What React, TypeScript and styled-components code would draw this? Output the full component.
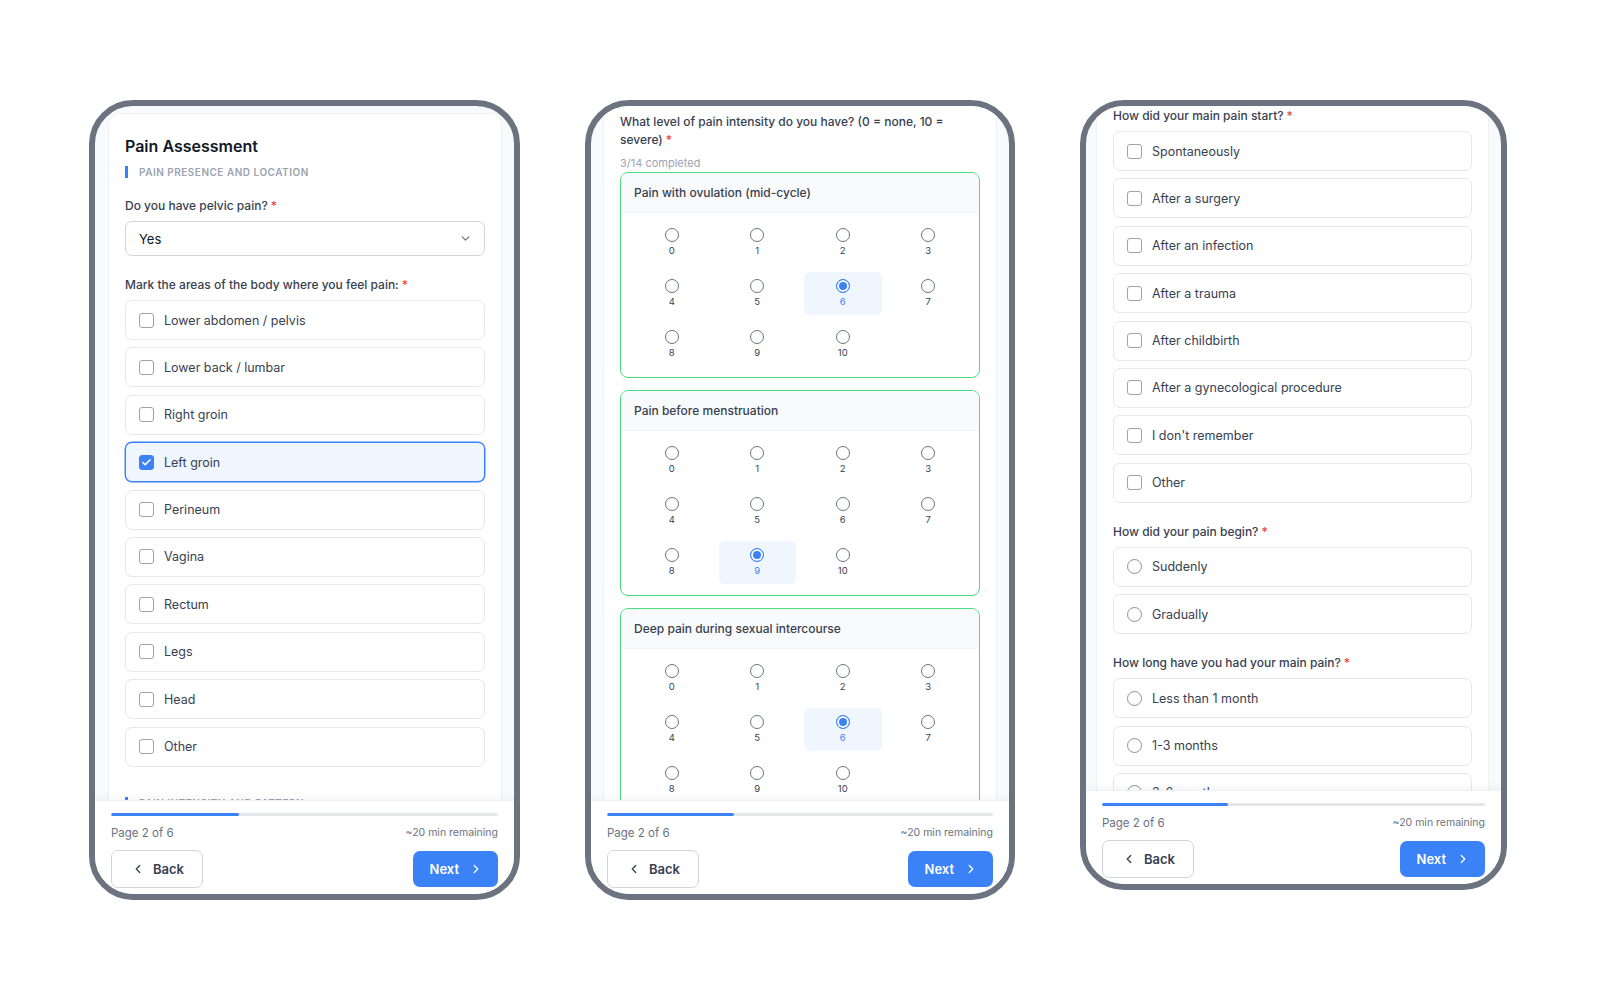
import React from 'react';
import styled, { createGlobalStyle } from 'styled-components';
import { Check, ChevronDown, ChevronLeft, ChevronRight } from 'lucide-react';

const GlobalStyle = createGlobalStyle`
    html, body {
        margin: 0;
        background: #ffffff;
    }

    body {
        color: #374151;
        font-family: Inter, "Noto Sans", "Liberation Sans", sans-serif;
        -webkit-font-smoothing: antialiased;
    }

    * {
        box-sizing: border-box;
    }
`;

const Stage = styled.main`
    align-items: flex-start;
    display: flex;
    gap: 65px;
    height: 1000px;
    padding: 100px 0 0 89px;
    width: 1600px;
`;

const Phone = styled.section<{ $w: number; $h: number }>`
    background: #f9fafb;
    border: 6px solid #6b7280;
    border-radius: 44px;
    display: flex;
    flex-direction: column;
    flex-shrink: 0;
    height: ${({ $h }) => $h}px;
    overflow: hidden;
    width: ${({ $w }) => $w}px;
`;

const Viewport = styled.div<{ $left: number }>`
    flex: 1;
    min-height: 0;
    overflow: hidden;
    padding: 0 12px 0 ${({ $left }) => $left}px;
`;

const Card = styled.div<{ $offset: number }>`
    background: #ffffff;
    border: 1px solid #f0f1f3;
    border-radius: 12px;
    margin-top: ${({ $offset }) => $offset}px;
    padding: 16px;
`;

const Title = styled.h1`
    color: #111827;
    font-size: 16px;
    font-weight: 600;
    line-height: 20px;
    margin: 6px 0 0;
`;

const Subtitle = styled.div<{ $gap: number }>`
    border-left: 3px solid #3b82f6;
    color: #9ca3af;
    font-size: 10px;
    font-weight: 600;
    letter-spacing: 0.5px;
    line-height: 12px;
    margin-top: ${({ $gap }) => $gap}px;
    padding-left: 11px;
    text-transform: uppercase;
`;

const Field = styled.div<{ $gap: number }>`
    margin-top: ${({ $gap }) => $gap}px;
`;

const Label = styled.div`
    color: #374151;
    font-size: 12px;
    font-weight: 500;
    line-height: 16px;
    margin-bottom: 7px;
`;

const Required = styled.span`
    color: #ef4444;
    margin-left: 3px;
`;

const Select = styled.div`
    align-items: center;
    border: 1px solid #d1d5db;
    border-radius: 7px;
    color: #111827;
    display: flex;
    font-size: 13px;
    height: 35px;
    justify-content: space-between;
    padding: 0 12px 0 13px;
`;

const OptionRow = styled.div<{ $checked?: boolean }>`
    align-items: center;
    background: ${({ $checked }) => ($checked ? '#eff6ff' : '#ffffff')};
    border: 1px solid ${({ $checked }) => ($checked ? '#3b82f6' : '#e5e7eb')};
    border-radius: 7px;
    box-shadow: ${({ $checked }) => ($checked ? '0 0 0 0.5px #3b82f6' : 'none')};
    color: #374151;
    display: flex;
    font-size: 12.5px;
    gap: 10px;
    height: 40px;
    padding: 0 13px;

    & + & {
        margin-top: 7.4px;
    }
`;

const CheckBox = styled.span<{ $checked?: boolean }>`
    align-items: center;
    background: ${({ $checked }) => ($checked ? '#3b82f6' : '#ffffff')};
    border: 1.5px solid ${({ $checked }) => ($checked ? '#3b82f6' : '#9ca3af')};
    border-radius: 3px;
    display: inline-flex;
    flex-shrink: 0;
    height: 15px;
    justify-content: center;
    width: 15px;
`;

const RadioCircle = styled.span`
    border: 1.5px solid #8a919c;
    border-radius: 50%;
    flex-shrink: 0;
    height: 15px;
    width: 15px;
`;

const Question = styled.div`
    color: #374151;
    font-size: 12px;
    font-weight: 500;
    line-height: 18px;
`;

const Completed = styled.div`
    color: #9ca3af;
    font-size: 11px;
    line-height: 14px;
    margin: 7px 0 2px;
`;

const ScaleGroup = styled.div`
    border: 1.5px solid #4ade80;
    border-radius: 8px;
    overflow: hidden;

    & + & {
        margin-top: 12px;
    }
`;

const ScaleHeader = styled.div`
    align-items: center;
    background: #f9fafb;
    border-bottom: 1px solid #f1f3f5;
    color: #374151;
    display: flex;
    font-size: 12px;
    font-weight: 500;
    height: 40px;
    padding: 0 13px;
`;

const ScaleGrid = styled.div`
    display: grid;
    gap: 8px;
    grid-template-columns: repeat(4, 1fr);
    padding: 8px 12px 11px;
`;

const ScaleCell = styled.div<{ $on: boolean }>`
    align-items: center;
    background: ${({ $on }) => ($on ? '#eff6ff' : 'transparent')};
    border-radius: 6px;
    display: flex;
    flex-direction: column;
    gap: 3px;
    padding: 7px 0;
`;

const ScaleDot = styled.span<{ $on: boolean }>`
    background: ${({ $on }) => ($on ? '#3b82f6' : '#ffffff')};
    border: 1.5px solid ${({ $on }) => ($on ? '#3b82f6' : '#6b7280')};
    border-radius: 50%;
    box-shadow: ${({ $on }) => ($on ? 'inset 0 0 0 2px #ffffff' : 'none')};
    height: 14px;
    width: 14px;
`;

const ScaleNumber = styled.span<{ $on: boolean }>`
    color: ${({ $on }) => ($on ? '#3b82f6' : '#374151')};
    font-size: 9.5px;
    line-height: 12px;
`;

const Footer = styled.footer`
    background: #ffffff;
    border-top: 1px solid #eef0f3;
    box-shadow: 0 -3px 8px rgba(17, 24, 39, 0.04);
    flex-shrink: 0;
    padding: 12px 16px 6px;
    position: relative;
`;

const Track = styled.div`
    background: #e5e7eb;
    border-radius: 2px;
    height: 3px;
    overflow: hidden;
`;

const Fill = styled.div<{ $pct: number }>`
    background: #3b82f6;
    border-radius: 2px;
    height: 100%;
    width: ${({ $pct }) => $pct}%;
`;

const MetaRow = styled.div`
    align-items: center;
    display: flex;
    justify-content: space-between;
    line-height: 14px;
    margin-top: 10px;
`;

const PageText = styled.span`
    color: #6b7280;
    font-size: 11.5px;
`;

const Remaining = styled.span`
    color: #6b7280;
    font-size: 10.5px;
`;

const ButtonRow = styled.div`
    align-items: center;
    display: flex;
    justify-content: space-between;
    margin-top: 10px;
`;

const BackButton = styled.button`
    align-items: center;
    background: #ffffff;
    border: 1.5px solid #d1d5db;
    border-radius: 7px;
    color: #374151;
    display: flex;
    font-family: inherit;
    font-size: 13px;
    font-weight: 600;
    gap: 8px;
    height: 38px;
    padding: 0 18px 0 19px;
`;

const NextButton = styled.button`
    align-items: center;
    background: #3b82f6;
    border: none;
    border-radius: 7px;
    color: #ffffff;
    display: flex;
    font-family: inherit;
    font-size: 13px;
    font-weight: 600;
    gap: 10px;
    height: 36px;
    padding: 0 15px 0 17px;
`;

const bodyAreas = [
    'Lower abdomen / pelvis',
    'Lower back / lumbar',
    'Right groin',
    'Left groin',
    'Perineum',
    'Vagina',
    'Rectum',
    'Legs',
    'Head',
    'Other',
];

const painStarts = [
    'Spontaneously',
    'After a surgery',
    'After an infection',
    'After a trauma',
    'After childbirth',
    'After a gynecological procedure',
    "I don't remember",
    'Other',
];

const scales = [
    { title: 'Pain with ovulation (mid-cycle)', value: 6 },
    { title: 'Pain before menstruation', value: 9 },
    { title: 'Deep pain during sexual intercourse', value: 6 },
];

const CheckOption = ({ label, checked }: { label: string; checked?: boolean }) => (
    <OptionRow $checked={checked}>
        <CheckBox $checked={checked}>
            {checked && <Check size={11} strokeWidth={3.5} color="#ffffff" />}
        </CheckBox>
        {label}
    </OptionRow>
);

const RadioOption = ({ label }: { label: string }) => (
    <OptionRow>
        <RadioCircle />
        {label}
    </OptionRow>
);

const Scale = ({ title, value }: { title: string; value: number }) => (
    <ScaleGroup>
        <ScaleHeader>{title}</ScaleHeader>
        <ScaleGrid>
            {Array.from({ length: 11 }, (_, n) => (
                <ScaleCell key={n} $on={n === value}>
                    <ScaleDot $on={n === value} />
                    <ScaleNumber $on={n === value}>{n}</ScaleNumber>
                </ScaleCell>
            ))}
        </ScaleGrid>
    </ScaleGroup>
);

const NavFooter = () => (
    <Footer>
        <Track>
            <Fill $pct={33} />
        </Track>
        <MetaRow>
            <PageText>Page 2 of 6</PageText>
            <Remaining>~20 min remaining</Remaining>
        </MetaRow>
        <ButtonRow>
            <BackButton>
                <ChevronLeft size={14} strokeWidth={2.2} />
                Back
            </BackButton>
            <NextButton>
                Next
                <ChevronRight size={14} strokeWidth={2.2} />
            </NextButton>
        </ButtonRow>
    </Footer>
);

const App = () => (
    <>
        <GlobalStyle />
        <Stage>
            <Phone $w={431} $h={800}>
                <Viewport $left={13}>
                    <Card $offset={7}>
                        <Title>Pain Assessment</Title>
                        <Subtitle $gap={10}>Pain presence and location</Subtitle>
                        <Field $gap={20}>
                            <Label>
                                Do you have pelvic pain?<Required>*</Required>
                            </Label>
                            <Select>
                                Yes
                                <ChevronDown size={13} color="#6b7280" />
                            </Select>
                        </Field>
                        <Field $gap={21}>
                            <Label>
                                Mark the areas of the body where you feel pain:<Required>*</Required>
                            </Label>
                            {bodyAreas.map((area) => (
                                <CheckOption key={area} label={area} checked={area === 'Left groin'} />
                            ))}
                        </Field>
                        <Subtitle $gap={30}>Pain intensity and pattern</Subtitle>
                    </Card>
                </Viewport>
                <NavFooter />
            </Phone>

            <Phone $w={430} $h={800}>
                <Viewport $left={12}>
                    <Card $offset={-10}>
                        <Question>
                            What level of pain intensity do you have? (0 = none, 10 = severe)
                            <Required>*</Required>
                        </Question>
                        <Completed>3/14 completed</Completed>
                        {scales.map((s) => (
                            <Scale key={s.title} title={s.title} value={s.value} />
                        ))}
                    </Card>
                </Viewport>
                <NavFooter />
            </Phone>

            <Phone $w={427} $h={790}>
                <Viewport $left={10}>
                    <Card $offset={-15}>
                        <Field $gap={0}>
                            <Label>
                                How did your main pain start?<Required>*</Required>
                            </Label>
                            {painStarts.map((p) => (
                                <CheckOption key={p} label={p} />
                            ))}
                        </Field>
                        <Field $gap={21}>
                            <Label>
                                How did your pain begin?<Required>*</Required>
                            </Label>
                            <RadioOption label="Suddenly" />
                            <RadioOption label="Gradually" />
                        </Field>
                        <Field $gap={21}>
                            <Label>
                                How long have you had your main pain?<Required>*</Required>
                            </Label>
                            <RadioOption label="Less than 1 month" />
                            <RadioOption label="1-3 months" />
                            <RadioOption label="3-6 months" />
                            <RadioOption label="6-12 months" />
                        </Field>
                    </Card>
                </Viewport>
                <NavFooter />
            </Phone>
        </Stage>
    </>
);

export default App;
